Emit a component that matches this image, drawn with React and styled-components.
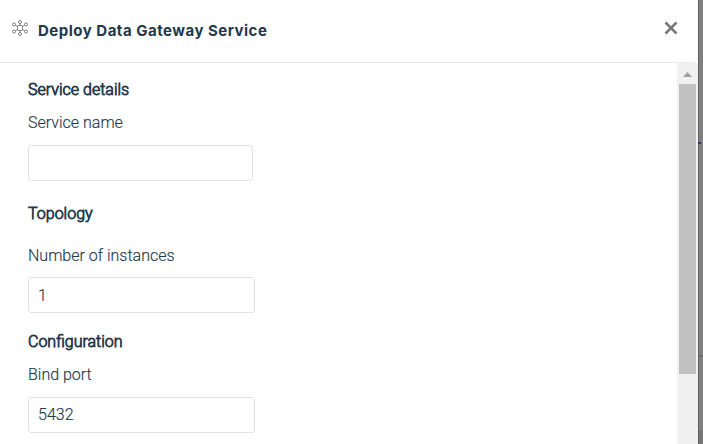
import React from 'react';
import styled, { createGlobalStyle } from 'styled-components';

const GlobalStyle = createGlobalStyle`
  *, *::before, *::after { box-sizing: border-box; }
  body {
    margin: 0;
    overflow: hidden;
    font-family: Roboto, sans-serif;
    font-size: 16px;
    color: #25394c;
  }
`;

const Screen = styled.div`
  display: flex;
  width: 703px;
  height: 444px;
  overflow: hidden;
  background: #808080;
`;

const Dialog = styled.section`
  display: flex;
  flex-direction: column;
  width: 698px;
  height: 444px;
  background: #fff;
`;

const Header = styled.header`
  flex: none;
  display: flex;
  align-items: flex-start;
  height: 63px;
  padding: 20px 20px 0 12px;
  border-bottom: 1px solid #e9eaea;
  border-bottom-right-radius: 6px;
`;

const ServiceIcon = styled.svg`
  flex: none;
  width: 16px;
  height: 16px;
  fill: none;
  stroke: #555;
  stroke-width: 0.7;
`;

const Title = styled.h1`
  flex: 1;
  margin: 0 0 0 10px;
  font: 700 15px/21px Inter, sans-serif;
  letter-spacing: 0.5px;
  white-space: nowrap;
`;

const CloseButton = styled.button`
  display: flex;
  margin: 1px 0 0;
  padding: 0;
  border: 0;
  background: none;
  svg { width: 14px; height: 14px; stroke: #777; stroke-width: 2.5; }
`;

const Body = styled.div`
  flex: 1;
  min-height: 0;
  display: flex;
`;

const Form = styled.form`
  flex: 1;
  display: flex;
  flex-direction: column;
  align-items: flex-start;
  padding: 17px 0 0 28px;
  overflow: hidden;
`;

const SectionTitle = styled.h2`
  flex: none;
  margin: ${p => p.$top || 0}px 0 0;
  font: 300 16px/20px Roboto, sans-serif;
  -webkit-text-stroke: 0.8px #25394c;
`;

const Label = styled.label`
  flex: none;
  margin-top: ${p => p.$top || 13}px;
  line-height: 20px;
  font-weight: 300;
  -webkit-text-stroke: 0.15px #25394c;
`;

const Field = styled.input`
  flex: none;
  width: ${p => p.$width || 227}px;
  height: 36px;
  margin: ${p => p.$top || 12}px 0 0;
  padding: 0 9px ${p => p.$lift || 0}px;
  border: 1px solid #e2e3e3;
  border-radius: 3px;
  background: #fff;
  color: #25394c;
  font: 300 16px Roboto, sans-serif;
  -webkit-text-stroke: 0.15px #25394c;
  outline: none;
`;

const ScrollTrack = styled.div`
  display: flex;
  flex-direction: column;
  align-items: center;
  width: 21px;
  padding-right: 1px;
  background: #f0f0f0;
`;

const ScrollArrow = styled.svg`
  flex: none;
  width: 9px;
  height: 5px;
  margin: 9px 0 7px;
  fill: #a0a0a0;
`;

const ScrollThumb = styled.div`
  flex: none;
  width: 17px;
  height: 290px;
  margin-left: 1px;
  background: #c1c1c1;
`;

const Backdrop = styled.aside`
  display: flex;
  flex-direction: column;
  flex: 1;
  border-left: 1px solid #626262;
  background: #808080;
`;

const Mark = styled.div`
  flex: none;
  width: ${p => p.$width};
  height: ${p => p.$height}px;
  margin-top: ${p => p.$top}px;
  margin-left: ${p => p.$left || 0}px;
  background: ${p => p.$color};
`;

export default function App() {
  return (
    <Screen>
      <GlobalStyle />
      <Dialog>
        <Header>
          <ServiceIcon viewBox="0 0 16 16">
            <rect x="5.5" y="5.5" width="5" height="5" rx="1" />
            <circle cx="8" cy="2" r="1.5" />
            <circle cx="8" cy="14" r="1.5" />
            <circle cx="2" cy="4.5" r="1.5" />
            <circle cx="14" cy="4.5" r="1.5" />
            <circle cx="2" cy="11.5" r="1.5" />
            <circle cx="14" cy="11.5" r="1.5" />
            <path d="M8 3.5v2M8 10.5v2M3.4 5.2 5.8 6.7M12.6 5.2 10.2 6.7M3.4 10.8 5.8 9.3M12.6 10.8 10.2 9.3" />
          </ServiceIcon>
          <Title>Deploy Data Gateway Service</Title>
          <CloseButton aria-label="Close">
            <svg viewBox="0 0 14 14"><path d="M1.5 1.5l11 11M12.5 1.5l-11 11" /></svg>
          </CloseButton>
        </Header>
        <Body>
          <Form>
            <SectionTitle>Service details</SectionTitle>
            <Label htmlFor="name">Service name</Label>
            <Field id="name" $width={225} />
            <SectionTitle $top={23}>Topology</SectionTitle>
            <Label htmlFor="instances" $top={22}>Number of instances</Label>
            <Field id="instances" $top={11} defaultValue="1" />
            <SectionTitle $top={19}>Configuration</SectionTitle>
            <Label htmlFor="port">Bind port</Label>
            <Field id="port" $lift={2} defaultValue="5432" />
          </Form>
          <ScrollTrack>
            <ScrollArrow viewBox="0 0 9 5"><path d="M0 5 4.5 0 9 5z" /></ScrollArrow>
            <ScrollThumb />
          </ScrollTrack>
        </Body>
      </Dialog>
      <Backdrop>
        <Mark $top={142} $left={-1} $width="3px" $height={2} $color="#34345f" />
        <Mark $top={211} $width="100%" $height={2} $color="#696969" />
        <Mark $top={73} $width="100%" $height={14} $color="#777" />
      </Backdrop>
    </Screen>
  );
}
